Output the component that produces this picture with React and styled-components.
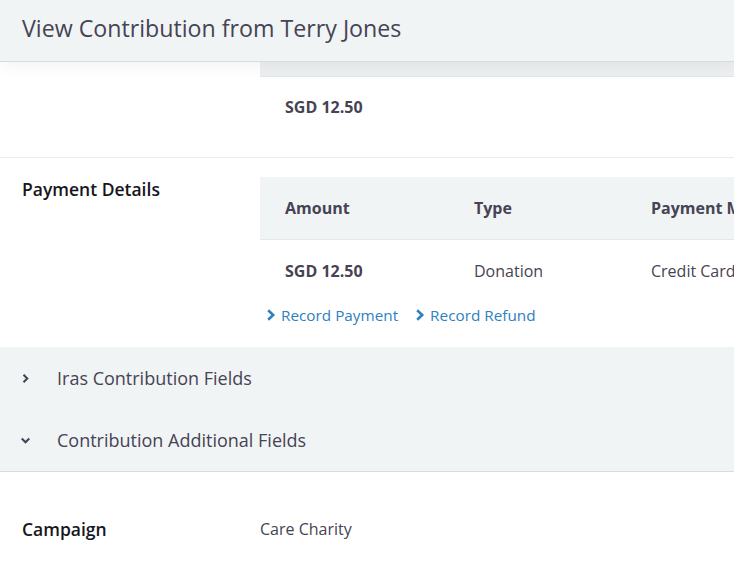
import styled, { createGlobalStyle } from "styled-components";

const GlobalStyle = createGlobalStyle`
  html, body {
    margin: 0;
    padding: 0;
    background: #fff;
    overflow: hidden;
  }
  body {
    font-family: "Open Sans", "Noto Sans", sans-serif;
    color: #464354;
  }
`;

const COLUMNS = [
  { key: "amount", label: "Amount", width: 189 },
  { key: "type", label: "Type", width: 177 },
  { key: "method", label: "Payment Method", width: 220 },
];

const PAYMENTS = [{ amount: "SGD 12.50", type: "Donation", method: "Credit Card" }];

const ChevronRight = ({ size = 12 }) => (
  <svg width={size} height={size} viewBox="0 0 12 12">
    <path d="M3.2 1.2 L8.2 6 L3.2 10.8" fill="none" stroke="currentColor" strokeWidth="2.6" />
  </svg>
);

const SmallChevron = ({ open }) => (
  <svg width="11" height="11" viewBox="0 0 10 10">
    <path
      d={open ? "M1.6 3.2 L5 6.6 L8.4 3.2" : "M3.2 1.6 L6.6 5 L3.2 8.4"}
      fill="none"
      stroke="currentColor"
      strokeWidth="1.9"
    />
  </svg>
);

function App() {
  return (
    <>
      <GlobalStyle />
      <Page>
        <Header>
          <Title>View Contribution from Terry Jones</Title>
        </Header>
        <Body>
          <Section $pb={20}>
            <Label />
            <TableWrap>
              <HeadStub />
              <Row $h={60}>
                <Cell $w={189} $bold>SGD 12.50</Cell>
              </Row>
            </TableWrap>
          </Section>
          <Section $border $pt={19} $pb={0}>
            <Label>Payment Details</Label>
            <TableWrap>
              <HeadRow>
                {COLUMNS.map((c) => (
                  <HeadCell key={c.key} $w={c.width}>
                    {c.label}
                  </HeadCell>
                ))}
              </HeadRow>
              {PAYMENTS.map((p, i) => (
                <Row key={i} $h={62}>
                  <Cell $w={189} $bold>{p.amount}</Cell>
                  <Cell $w={177}>{p.type}</Cell>
                  <Cell $w={220}>{p.method}</Cell>
                </Row>
              ))}
              <Links>
                <Link>
                  <ChevronRight />
                  Record Payment
                </Link>
                <Link>
                  <ChevronRight />
                  Record Refund
                </Link>
              </Links>
            </TableWrap>
          </Section>
          <Accordions>
            <AccordionRow>
              <Toggle>
                <SmallChevron />
              </Toggle>
              Iras Contribution Fields
            </AccordionRow>
            <AccordionRow>
              <Toggle>
                <SmallChevron open />
              </Toggle>
              Contribution Additional Fields
            </AccordionRow>
          </Accordions>
          <FieldRow>
            <FieldLabel>Campaign</FieldLabel>
            <FieldValue>Care Charity</FieldValue>
          </FieldRow>
        </Body>
      </Page>
    </>
  );
}

export default App;

const Page = styled.div`
  width: 734px;
  height: 573px;
  overflow: hidden;
  display: flex;
  flex-direction: column;
`;

const Header = styled.div`
  position: relative;
  z-index: 2;
  box-sizing: border-box;
  height: 62px;
  flex: none;
  display: flex;
  align-items: center;
  padding: 0 0 5px 22px;
  background: #f1f4f5;
  border-bottom: 1px solid #d6dde2;
  box-shadow: 0 4px 14px rgba(0, 0, 0, 0.05);
`;

const Title = styled.h1`
  margin: 0;
  font-size: 23.2px;
  font-weight: 400;
  color: #464354;
  white-space: nowrap;
`;

const Body = styled.div`
  display: flex;
  flex-direction: column;
`;

const Section = styled.div`
  display: flex;
  padding-top: ${(p) => p.$pt || 0}px;
  padding-bottom: ${(p) => p.$pb || 0}px;
  border-top: ${(p) => (p.$border ? "1px solid #e8edef" : "none")};
`;

const Label = styled.div`
  width: 238px;
  flex: none;
  padding-left: 22px;
  font-size: 17.5px;
  font-weight: 600;
  color: #16161c;
  line-height: 24px;
`;

const TableWrap = styled.div`
  display: flex;
  flex-direction: column;
  min-width: 600px;
`;

const HeadStub = styled.div`
  height: 14px;
  background: #eceff0;
  border-bottom: 1px solid #e0e6e8;
`;

const HeadRow = styled.div`
  display: flex;
  height: 62px;
  align-items: center;
  background: #f1f4f5;
  border-bottom: 1px solid #e3e8ea;
`;

const HeadCell = styled.div`
  width: ${(p) => p.$w}px;
  flex: none;
  box-sizing: border-box;
  padding-left: 25px;
  font-size: 16px;
  font-weight: 700;
  color: #464354;
  white-space: nowrap;
`;

const Row = styled.div`
  display: flex;
  height: ${(p) => p.$h}px;
  align-items: center;
`;

const Cell = styled.div`
  width: ${(p) => p.$w}px;
  flex: none;
  box-sizing: border-box;
  padding-left: 25px;
  font-size: 16px;
  font-weight: ${(p) => (p.$bold ? 700 : 400)};
  color: #464354;
  white-space: nowrap;
`;

const Links = styled.div`
  display: flex;
  gap: 16px;
  padding: 3px 0 22px 5px;
`;

const Link = styled.a`
  display: flex;
  align-items: center;
  gap: 4px;
  font-size: 15.3px;
  line-height: 20px;
  color: #2f80c0;
  cursor: pointer;
  white-space: nowrap;
`;

const Accordions = styled.div`
  background: #f1f4f5;
  border-bottom: 1px solid #d6dde2;
`;

const AccordionRow = styled.div`
  display: flex;
  align-items: center;
  height: 62px;
  padding-left: 20px;
  font-size: 18px;
  color: #464354;
`;

const Toggle = styled.span`
  display: flex;
  width: 37px;
  color: #464354;
`;

const FieldRow = styled.div`
  display: flex;
  align-items: center;
  padding: 45px 0 0 22px;
`;

const FieldLabel = styled.div`
  width: 238px;
  font-size: 17.5px;
  font-weight: 600;
  color: #16161c;
`;

const FieldValue = styled.div`
  font-size: 16px;
  color: #464354;
`;
